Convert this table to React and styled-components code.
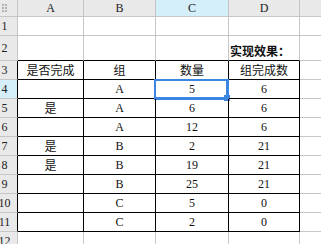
import React from "react";
import styled, { createGlobalStyle } from "styled-components";

const Global = createGlobalStyle`
  html, body { margin: 0; padding: 0; background: #fff; overflow: hidden; }
  #root { width: 321px; height: 244px; overflow: hidden; }
`;

const GRID = "#c6c6c6";
const HEAD = "#e9e9e9";
const SEL_HEAD = "#d4eefa";
const BLUE = "#3a86e2";

const Sheet = styled.div`
  display: grid;
  grid-template-columns: 18px 66px 72px 73px 71px 60px;
  grid-template-rows: 17px 19px 25px repeat(10, 19px);
  width: 321px;
  overflow: hidden;
  font-family: "Liberation Serif", "Noto Sans CJK SC", serif;
  font-size: 12px;
  color: #111;
`;

const Corner = styled.div`
  background: ${HEAD};
  border-right: 1px solid ${GRID};
  border-bottom: 1px solid ${GRID};
  box-sizing: border-box;
  padding: 4px 0 0 2px;
  display: flex;
  align-items: flex-start;
`;

const ColHeader = styled.div`
  box-sizing: border-box;
  background: ${(p) => (p.$selected ? SEL_HEAD : HEAD)};
  border-right: 1px solid ${GRID};
  border-bottom: 1px solid ${GRID};
  display: flex;
  align-items: center;
  justify-content: center;
  font-family: "Liberation Serif", serif;
  font-size: 12px;
  color: #222;
`;

const RowHeader = styled.div`
  box-sizing: border-box;
  background: ${(p) => (p.$selected ? SEL_HEAD : HEAD)};
  border-right: 1px solid ${(p) => (p.$boxed ? "#000" : GRID)};
  border-bottom: 1px solid ${GRID};
  display: flex;
  align-items: center;
  font-family: "Liberation Serif", serif;
  font-size: 12px;
  color: #222;
`;

const RowLabel = styled.span`
  width: 9px;
  display: flex;
  justify-content: center;
  white-space: nowrap;
`;

const Cell = styled.div`
  position: relative;
  box-sizing: border-box;
  border-right: 1px solid ${(p) => (p.$boxRight ? "#000" : GRID)};
  border-bottom: 1px solid ${(p) => (p.$boxBottom ? "#000" : GRID)};
  display: flex;
  align-items: ${(p) => (p.$bottom ? "flex-end" : "center")};
  justify-content: ${(p) => (p.$left ? "flex-start" : "center")};
  padding: ${(p) => (p.$left ? "0 0 3px 1px" : "0")};
  font-family: ${(p) =>
    p.$cjk
      ? `"Noto Sans CJK SC", sans-serif`
      : `"Liberation Serif", "Noto Sans CJK SC", serif`};
  font-size: 12px;
  font-weight: ${(p) => (p.$bold ? 700 : 400)};
  line-height: 1;
  white-space: nowrap;
  color: #111;
`;

const Selection = styled.div`
  position: absolute;
  left: -2px;
  top: -1px;
  width: 75px;
  height: 21px;
  box-sizing: border-box;
  border: 2px solid ${BLUE};
  border-right-width: 3px;
  border-bottom-width: 3px;
  pointer-events: none;
`;

const Handle = styled.div`
  position: absolute;
  right: -4px;
  bottom: -4px;
  width: 6px;
  height: 6px;
  background: ${BLUE};
`;

const Grip = () => (
  <svg width="6" height="8" viewBox="0 0 6 8">
    {[0, 3, 6].map((y) =>
      [0, 3].map((x) => (
        <rect key={`${x}-${y}`} x={x} y={y} width="2" height="2" fill="#b2b2b2" />
      ))
    )}
  </svg>
);

const cols = ["A", "B", "C", "D", "E"];

const data = {
  2: ["", "", "", "实现效果：", ""],
  3: ["是否完成", "组", "数量", "组完成数", ""],
  4: ["", "A", "5", "6", ""],
  5: ["是", "A", "6", "6", ""],
  6: ["", "A", "12", "6", ""],
  7: ["是", "B", "2", "21", ""],
  8: ["是", "B", "19", "21", ""],
  9: ["", "B", "25", "21", ""],
  10: ["", "C", "5", "0", ""],
  11: ["", "C", "2", "0", ""],
};

const isCjk = (s) => /[\u3000-\u9fff\uff00-\uffef]/.test(s);

export default function App() {
  const rows = [];
  for (let r = 1; r <= 12; r++) {
    const inTable = r >= 3 && r <= 11;
    rows.push(
      <RowHeader key={`h${r}`} $selected={r === 4} $boxed={inTable}>
        <RowLabel>{r}</RowLabel>
      </RowHeader>
    );
    cols.forEach((c, ci) => {
      const text = (data[r] || [])[ci] || "";
      const inCol = ci <= 3;
      const boxRight = inTable && inCol;
      const boxBottom = inCol && (inTable || r === 2);
      const isNote = r === 2 && ci === 3;
      rows.push(
        <Cell
          key={`${c}${r}`}
          $boxRight={boxRight}
          $boxBottom={boxBottom}
          $cjk={isCjk(text)}
          $bold={isNote}
          $left={isNote}
          $bottom={isNote}
        >
          {text}
          {r === 4 && c === "C" && (
            <Selection>
              <Handle />
            </Selection>
          )}
        </Cell>
      );
    });
  }

  return (
    <>
      <Global />
      <Sheet>
        <Corner>
          <Grip />
        </Corner>
        {cols.map((c) => (
          <ColHeader key={c} $selected={c === "C"}>
            {c === "E" ? "" : c}
          </ColHeader>
        ))}
        {rows}
      </Sheet>
    </>
  );
}
